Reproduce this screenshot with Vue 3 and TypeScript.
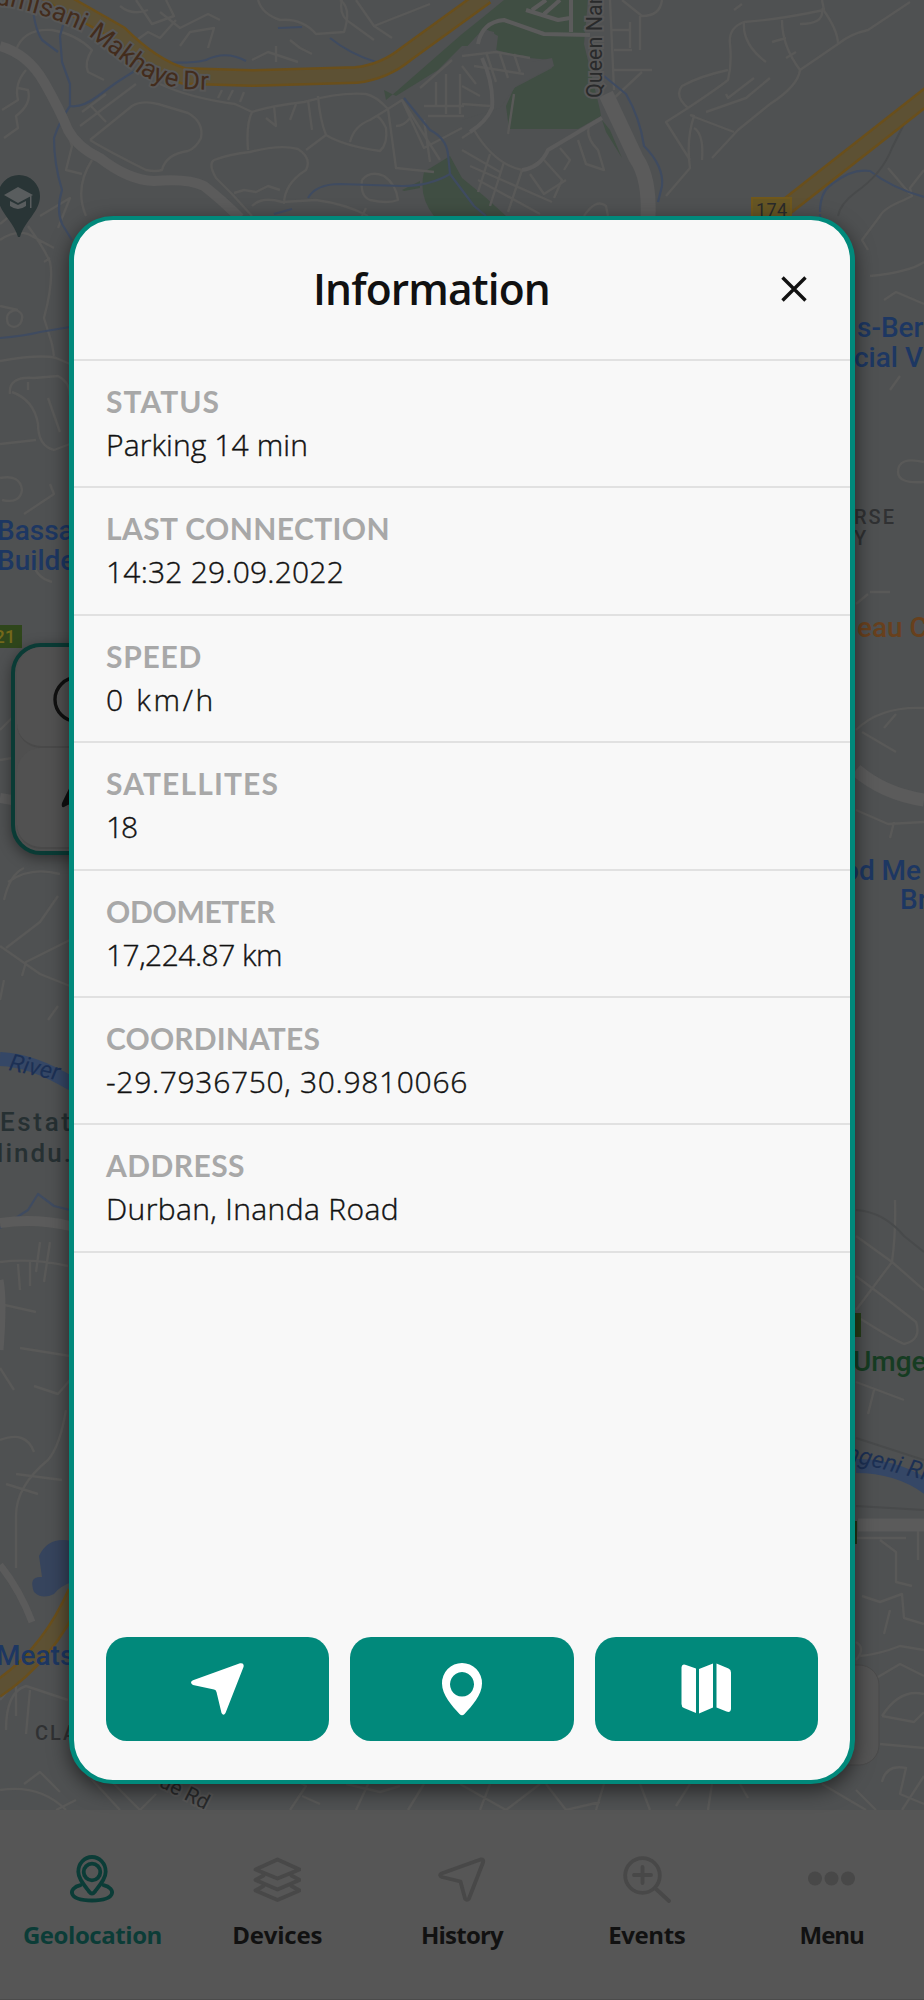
<script setup lang="ts">
import type { Directive } from "vue";

interface InfoRow {
	label: string;
	value: string;
	labelWidth: number;
	valueWidth: number;
}

interface Tab {
	name: string;
	icon: string;
	width: number;
}

const rows: InfoRow[] = [
	{ label: "STATUS", value: "Parking 14 min", labelWidth: 114, valueWidth: 202 },
	{ label: "LAST CONNECTION", value: "14:32 29.09.2022", labelWidth: 284, valueWidth: 238 },
	{ label: "SPEED", value: "0 km/h", labelWidth: 96, valueWidth: 110 },
	{ label: "SATELLITES", value: "18", labelWidth: 173, valueWidth: 30 },
	{ label: "ODOMETER", value: "17,224.87 km", labelWidth: 169, valueWidth: 176 },
	{ label: "COORDINATES", value: "-29.7936750, 30.9810066", labelWidth: 214, valueWidth: 362 },
	{ label: "ADDRESS", value: "Durban, Inanda Road", labelWidth: 139, valueWidth: 293 },
];

const tabs: Tab[] = [
	{ name: "Geolocation", icon: "geo", width: 139 },
	{ name: "Devices", icon: "layers", width: 90 },
	{ name: "History", icon: "arrow", width: 82 },
	{ name: "Events", icon: "zoom", width: 77 },
	{ name: "Menu", icon: "dots", width: 64 },
];

const activeTab = "Geolocation";

// Tracks a line of text so that it fills the given width.
const vFit: Directive<HTMLElement, number> = {
	mounted(el, { value }) {
		const count = (el.textContent ?? "").length;
		const natural = el.getBoundingClientRect().width;
		el.style.letterSpacing = `${(value - natural) / count}px`;
	},
};

const minorRoads: string[] = [
	// top left
	"M16 50 Q24 28 52 30 Q76 34 92 50 Q84 62 88 72 L104 80",
	"M26 70 Q14 84 18 100 L2 110 M18 88 l10 2 q4 14 -12 26 l2 12 l-14 10",
	"M90 140 L132 106 Q142 100 158 104 L188 113 Q204 122 201 138 Q196 148 188 151 Q166 154 162 170 Q156 172 146 170 Q106 150 90 140",
	"M80 126 L136 84 M90 105 L106 122 M82 112 l24 -18 M66 128 L72 146 L66 170 L82 174",
	"M160 84 Q190 98 235 104 L252 112 Q246 124 248 150 M252 112 Q270 106 304 102 Q340 92 366 94 Q376 96 388 109",
	"M218 98 l4 -8 M228 100 l5 -10 M240 102 l4 -10 M274 106 l2 20 l-10 -8 M296 104 l-6 16 M308 100 l4 30",
	"M318 96 Q320 120 326 135 Q344 146 380 151 Q388 144 386 128 Q380 116 376 116 M326 135 L306 150",
	"M214 160 Q208 164 216 178 L232 194 L252 216 M214 160 Q230 154 250 152 Q280 144 298 149 Q312 158 306 170 Q284 184 284 204",
	"M252 206 Q262 196 282 202 L316 200 Q346 204 368 216 M234 193 l10 -3 l12 2 l12 -6 l12 4",
	"M120 6 Q132 16 148 10 M124 30 l10 12 l14 -10 l12 6 l16 -18 M136 0 l16 24 l22 -8 l-8 -16 M180 46 l10 -14 l24 -4 l-6 20 M160 12 l20 16 l28 -14 l12 6",
	"M258 0 Q262 14 280 20 Q302 18 316 34 L344 32 Q352 8 340 0 M290 40 l10 8 l12 6 M252 60 l16 -8 l30 10 M276 46 v16",
	"M342 0 Q338 16 352 24 L374 40 M356 0 L374 26 L430 4 M374 26 l18 12",
	"M92 160 Q74 188 86 216 M40 216 l30 -18 l-12 30 M0 224 l12 -10",
	"M350 142 Q354 126 370 120 L388 109 L402 100 L440 160 M388 109 L396 168 L434 172 M402 100 L424 148 L462 128 M410 118 q-6 8 -14 8 M424 120 L430 162",
	"M362 180 Q360 196 370 200 Q388 204 398 200 Q396 184 384 176 Q370 170 362 180 M366 208 l-6 12",
	// top centre, round the park
	"M420 88 L452 60 M424 106 h40 M428 116 h36 M436 82 v24 M446 74 v40 M460 74 v40",
	"M462 56 L496 52 L530 58 M474 66 L524 74 M486 52 l10 30 M500 54 l8 24 M514 54 l6 18 M462 66 l14 18 M462 86 l18 10 M462 104 l28 2",
	"M474 130 Q494 164 522 170 Q542 164 548 150 L602 118 M474 130 L462 138 M508 134 Q512 108 514 94",
	"M462 150 L500 172 M470 166 L552 202 M478 180 L540 214 M490 154 L478 192 M504 162 L490 206 M522 170 L508 212 M544 160 l18 20 l-8 18 M560 148 l10 12 l-6 10 M590 124 q-6 12 8 26 l6 20 l-18 -6 l-8 -24",
	"M584 216 Q596 198 606 206 L608 216 M530 174 l14 20 l22 -14",
	"M610 0 L614 90 M611 30 h18 M614 50 h18 M612 70 h40 M622 0 L642 16 Q660 16 662 0 M640 16 V50 M630 22 V48 M642 72 L612 100",
	// top right
	"M822 0 L824 10 Q776 20 744 22 Q728 28 730 44 Q732 64 728 80 Q718 88 688 108 Q674 96 682 86 Q700 76 728 70",
	"M744 22 Q742 44 766 62 M782 20 Q782 46 800 70 Q798 86 770 104 L738 130 L712 158 M822 8 Q838 30 838 44 L800 70",
	"M838 44 Q850 34 868 30 L910 2 M800 24 q24 0 22 -14 M772 42 l14 -4 M742 4 l-8 6 M786 58 l10 -6",
	"M688 108 L666 122 L690 160 M690 115 L694 116 Q686 140 690 168 L666 196 M692 116 L734 132 M706 112 L746 98 L770 78 M694 128 Q704 134 702 160 M754 78 L728 98 l-2 -4",
	"M880 216 Q884 208 904 200 L912 196 L910 188 L924 170 M888 168 L910 194 M880 216 L862 240 L868 250",
	// left strip
	"M0 240 q14 -10 28 -6 l26 14 M28 226 Q44 248 50 262 Q54 280 44 318 L52 344 L54 356 M44 262 l6 -4 M0 306 l18 4 M8 324 q-4 -12 8 -14 q10 4 4 14 q-6 6 -12 0",
	"M0 361 Q40 354 56 358 L70 364 M10 394 Q8 376 34 378 L58 376 Q70 382 70 396 M12 392 Q34 400 38 424 Q38 446 54 450 L70 444 M48 398 L60 432 M0 444 l36 -4 M28 382 v8",
	"M0 478 Q20 474 22 490 Q20 504 2 500 M24 514 L54 494 L50 484 M34 552 Q30 576 52 582 M0 730 L24 706 M0 760 l12 -2 M8 882 Q30 866 60 874 M4 900 Q10 874 24 868 M58 896 L40 922 L6 948",
	"M0 946 L40 974 L70 986 M22 976 L26 962 L70 940 M0 1000 L4 980 M48 1020 l10 -14",
	"M0 1262 Q32 1258 68 1266 M18 1264 l2 26 M30 1262 v24 M40 1242 l-4 30 M50 1242 l-6 40 M0 1304 L36 1312 M20 1348 L70 1356 M0 1368 L14 1390 M34 1386 L58 1394 L70 1380 M0 1440 Q26 1430 34 1452 M16 1474 l46 6 M6 1484 l32 10 M66 1410 Q60 1446 48 1460 Q16 1486 16 1516 L16 1568",
	"M6 1730 Q6 1692 26 1686 L68 1700 M16 1686 V1716 M30 1690 l-4 44 M0 1700 l10 -12 M24 1784 l16 -12 l20 20",
	"M0 1790 Q40 1784 66 1810 M74 1760 L120 1810 M108 1778 L140 1810 L156 1794 M76 1800 l-20 10",
	// strip under the sheet
	"M290 1810 L306 1786 L296 1780 M302 1796 L320 1804 M356 1810 L370 1780 M346 1784 L380 1792 L400 1786 M424 1784 L408 1810 M460 1784 L506 1810 L540 1784 M490 1784 L480 1810 M546 1784 L566 1810 L600 1802 M604 1784 L596 1810 M640 1784 L650 1810 M690 1784 L676 1806 M712 1784 L708 1810 M740 1784 l8 14 M822 1784 L866 1810 M902 1810 L924 1776",
	// right strip
	"M870 276 Q910 272 924 262 M884 300 L896 292 L924 304 M900 376 l-10 14 M924 462 Q898 456 898 472 Q898 484 924 482 M856 730 Q880 706 924 708 M884 728 l12 -14 M862 732 l34 20 M856 810 L888 824 L924 822 M890 838 L894 822 M870 592 l20 0 M856 604 l12 -10",
	"M895 1200 Q896 1232 892 1262 L856 1310 M856 1236 L892 1262 L924 1290 M856 1276 L888 1300 L916 1322 Q922 1340 904 1344 Q894 1340 856 1316 M856 1382 L904 1400 M874 1390 L868 1414",
	"M856 1538 h50 M880 1540 l16 12 v30 l16 4 M918 1530 v30 M862 1596 L880 1602 L902 1594 L904 1618 L924 1624 M890 1610 l-6 24 M856 1642 q10 6 0 18 M860 1656 Q880 1654 900 1646 L924 1650",
	"M856 1690 L900 1664 L924 1676 M882 1716 Q900 1688 924 1694 M882 1716 L914 1722 L924 1712 M880 1744 L924 1748 M882 1782 Q886 1764 906 1768 L900 1794 L924 1804 M856 1790 l20 20",
];

const streams: string[] = [
	"M32 0 Q34 28 42 40 L58 52 M70 0 L60 36 L62 62 L70 84 L70 106 Q60 120 54 138 Q54 164 62 190 Q56 210 62 224 L72 240",
	"M70 106 Q82 108 98 96 Q116 82 136 70",
	"M162 62 Q190 64 206 60 Q226 50 246 61",
	"M330 38 Q350 54 376 62 M278 28 L302 27",
	"M404 98 L430 130 Q446 138 448 154 L450 174 L474 206 L486 216",
	"M308 198 Q316 184 340 184 L402 186 Q430 186 450 174 M274 214 l18 -5",
	"M604 76 L626 94 Q640 118 644 146 Q664 166 662 186 L658 202",
	"M820 212 Q820 192 832 184 Q852 168 870 171 Q892 188 924 197",
	"M0 338 Q24 336 40 332 L70 327 M820 214 Q820 224 824 228",
	"M0 1228 L28 1210 L38 1194 L54 1206 L70 1210",
];
</script>

<template>
	<div class="screen">
		<svg class="map" viewBox="0 0 924 1810" aria-hidden="true">
			<rect width="924" height="1810" fill="#4f5152" />
			<g class="park">
				<path d="M384 90 L386 100 L398 90 L462 34 L482 18 L504 0 H588 L584 44 L600 110 L601 116 L578 129 H509 L506 106 L514 88 L552 68 L550 60 L530 58 L520 56 L496 50 L494 32 L486 30 L480 46 L462 46 L438 70 L396 96 Z" />
				<path d="M424 172 L450 156 L462 178 L484 196 L506 216 H434 Q418 196 424 172 Z M402 190 L420 181 V188 L404 191 Z M602 120 L610 130 L622 158 L606 132 Z" />
			</g>
			<g class="built">
				<path d="M462 52 L484 28 L498 36 L496 52 L526 56 L532 62 L552 58 L554 66 L516 86 L500 108 L462 120 Z" />
			</g>
			<g class="minor">
				<path v-for="(d, i) in minorRoads" :key="i" :d="d" />
			</g>
			<g class="stream">
				<path v-for="(d, i) in streams" :key="i" :d="d" />
			</g>
			<path class="rail" d="M838 216 Q840 204 856 192 Q882 174 892 148 L910 112 M856 1210 Q884 1212 904 1236 L924 1252 M856 1438 L924 1460 M856 1506 L924 1510" />

			<g class="major">
				<path d="M0 46 Q28 54 44 82 Q60 110 68 130 Q78 148 100 158 Q128 180 154 181 Q188 178 204 186 Q222 200 240 218" />
				<path d="M606 94 L636 158 Q650 178 648 218" stroke-width="15" />
				<path d="M478 44 Q482 22 504 20 L544 34 L590 35 M482 58 Q494 84 492 108 Q486 122 470 132 M571 32 V0 M526 10 l32 10 l12 -2 M532 10 l14 -10 M544 14 l16 -14" stroke-width="4" />
				<path d="M602 118 L548 150 Q540 168 522 170" stroke-width="4" />
				<path d="M856 770 Q884 794 924 800 M858 1525 H924" stroke-width="13" />
				<path d="M0 798 L12 800 M0 1223 Q36 1218 70 1226" stroke-width="10" />
				<path d="M0 1280 Q4 1300 0 1350 M0 1565 Q20 1590 32 1622" stroke-width="7" />
			</g>

			<path class="highway-edge" d="M46 -8 L120 34 Q152 66 184 76 L252 78 L356 75 Q384 72 406 54 L486 -4" />
			<path class="highway" d="M46 -8 L120 34 Q152 66 184 76 L252 78 L356 75 Q384 72 406 54 L486 -4" />
			<path class="highway-edge" d="M772 218 L930 94" />
			<path class="highway" d="M772 218 L930 94" />
			<path class="highway-edge" d="M-4 1690 Q48 1656 76 1592" />
			<path class="highway" d="M-4 1690 Q48 1656 76 1592" />

			<path class="water" d="M39 1556 Q48 1536 72 1541 V1582 Q60 1586 54 1594 Q42 1600 34 1592 Q28 1576 42 1577 Z" />
			<path class="river" d="M0 1059 Q32 1060 72 1084 M856 1466 Q898 1466 928 1488" />

			<path id="makhaye" class="guide" d="M-12 4 Q14 6 30 12 Q60 20 84 32 Q112 54 134 70 Q156 85 184 89 L240 91" />
			<text class="street brown" font-size="26"><textPath href="#makhaye" startOffset="7">umisani Makhaye Dr</textPath></text>
			<text class="street" font-size="21.5" transform="translate(602 98) rotate(-90)">Queen Nandi</text>
			<text class="street" font-size="21" transform="translate(158 1786) rotate(27)">ue Rd</text>

			<g>
				<path fill="#293536" d="M19 175 a21 21 0 0 1 21 21 C40 212 25 220 20 237 h-2 C13 220 -2 212 -2 196 a21 21 0 0 1 21 -21 Z" />
				<path fill="#595d5e" d="M4 195 L18 187 L33 195 L18 203 Z M10 201 L18 205 L26 201 V206 Q18 212 10 206 Z M30 196 h1.5 v12 h-1.5 Z" />
			</g>

			<rect x="752" y="198" width="39" height="28" fill="#665624" stroke="#70581c" stroke-width="2" />
			<text x="756" y="216" class="shield" font-size="18" textLength="31">174</text>
			<rect x="-20" y="625" width="42" height="23" fill="#2f461b" />
			<text x="-6" y="643" font-size="19" fill="#74681a" font-weight="500">21</text>

			<g class="place blue">
				<text x="-3" y="540">Bassa</text>
				<text x="-3" y="570">Builde</text>
				<text x="857" y="337">s-Ber</text>
				<text x="854" y="367">cial V</text>
				<text x="843" y="880">od Me</text>
				<text x="900" y="909">Br</text>
				<text x="-4" y="1665">Meats</text>
			</g>
			<text class="place orange" x="857" y="637">eau C</text>
			<text class="place slate" x="0" y="1131" textLength="70">Estat</text>
			<text class="place slate" x="-15" y="1162" textLength="86">Hindu.</text>
			<text class="area" x="854" y="524">RSE</text>
			<text class="area" x="854" y="545">Y</text>
			<text class="area" x="35" y="1740">CLA</text>
			<text class="river-name" transform="translate(8 1070) rotate(12)">River</text>
			<text class="river-name" transform="translate(845 1460) rotate(14)">ngeni Ri</text>
			<rect x="840" y="1313" width="21" height="24" fill="#273d18" />
			<rect x="840" y="1521" width="17" height="23" fill="#203616" />
			<text class="place green" x="853" y="1371">Umge</text>

			<rect x="780" y="1665" width="99" height="100" rx="20" fill="#555555" stroke="#4b4b4b" stroke-width="1" />
		</svg>

		<aside class="map-tools">
			<div class="tool">
				<svg viewBox="0 0 48 48">
					<circle cx="25" cy="26.500" r="22" fill="none" stroke="#101010" stroke-width="3.4" />
				</svg>
			</div>
			<div class="tool">
				<svg viewBox="0 0 48 48"><path d="M26 -4 L44 32 Q26 24 12 33 Q9 34 10 29 Z" fill="#101010" /></svg>
			</div>
		</aside>

		<nav class="tabbar">
			<button
				v-for="tab in tabs"
				:key="tab.name"
				type="button"
				class="tab"
				:class="{ active: tab.name === activeTab }"
			>
				<svg class="tab-icon" viewBox="0 0 48 48" aria-hidden="true">
					<g v-if="tab.icon === 'geo'">
						<path d="M24 38.5 Q22.500 38.500 21 36.500 C15 28.500 10.300 23 10.300 16.700 a13.700 14.700 0 0 1 27.400 0 C37.700 23 33 28.500 27 36.500 Q25.500 38.500 24 38.500 Z" />
						<circle cx="24" cy="17" r="8.300" />
						<path d="M12.500 30.200 C0 33 -1 45.500 24 45.500 S48 33 35.500 30.200" />
					</g>
					<g v-else-if="tab.icon === 'layers'">
						<path d="M24.500 4.500 L46.500 14.500 L24.500 23.500 L2.500 14.500 Z" />
						<path d="M10.500 20.500 L2.500 25 L24.500 34.500 L46.500 25 L38.500 20.500" />
						<path d="M10.500 31 L2.500 35.500 L24.500 45 L46.500 35.500 L38.500 31" />
					</g>
					<path v-else-if="tab.icon === 'arrow'" d="M3.500 18.500 L42.500 4.500 Q46 4 45 7.500 L31 43.500 Q29 46 27 43.500 L22.500 26.500 L4 22 Q0.500 20 3.500 18.500 Z" />
					<g v-else-if="tab.icon === 'zoom'">
						<circle cx="19.500" cy="20.500" r="17.300" />
						<path d="M19.500 12 V28 M11 20 H28 M32.500 33.500 L46 46" />
					</g>
					<g v-else class="dots">
						<circle cx="7" cy="23.500" r="7" />
						<circle cx="23.500" cy="23.500" r="7" />
						<circle cx="40" cy="23.500" r="7" />
					</g>
				</svg>
				<span v-fit="tab.width" class="tab-name">{{ tab.name }}</span>
			</button>
		</nav>

		<div class="overlay">
			<section class="sheet" role="dialog" aria-label="Information">
				<header class="sheet-head">
					<h1 class="sheet-title"><span v-fit="237">Information</span></h1>
					<button type="button" class="close" aria-label="Close">
						<svg viewBox="0 0 28 28"><path d="M2.500 2.500 L25.500 25.500 M25.500 2.500 L2.500 25.500" /></svg>
					</button>
				</header>
				<dl class="rows">
					<div v-for="row in rows" :key="row.label" class="row">
						<dt><span v-fit="row.labelWidth">{{ row.label }}</span></dt>
						<dd><span v-fit="row.valueWidth">{{ row.value }}</span></dd>
					</div>
				</dl>
				<footer class="actions">
					<button type="button" class="action" aria-label="Navigate">
						<svg viewBox="0 0 56 56">
							<path d="M50 2.300 Q54.500 1.500 53.500 6 L35.500 52 Q33.500 55.500 31.500 52 L26.500 31 Q26 29 24 28.600 L3 24 Q-1 21.500 3 19.300 Z" />
						</svg>
					</button>
					<button type="button" class="action" aria-label="Street view">
						<svg viewBox="0 0 56 56">
							<path fill-rule="evenodd" d="M28 2 a20 20 0 0 1 20 20.500 C48 34 38 45 30.500 53 Q28 55.500 25.500 53 C18 45 8 34 8 22.500 A20 20 0 0 1 28 2 Z M28 11 a12 12.300 0 1 0 0.010 0 Z" />
						</svg>
					</button>
					<button type="button" class="action" aria-label="Open map">
						<svg viewBox="0 0 56 56">
							<path d="M18 7.500 V52 L6 47 Q3.500 46 3.500 43 V6.500 Q4 2.500 8 4 Z M21 8 L35 2.500 V46.500 L21 52.500 Z M38.500 2.500 L50.500 7.500 Q53 8.500 53 11.500 V48 Q52.500 52 48.500 50.500 L38.500 46.500 Z" />
						</svg>
					</button>
				</footer>
			</section>
		</div>
	</div>
</template>

<style>
body {
	margin: 0;
	background: #565656;
}
</style>

<style scoped>
.screen {
	position: relative;
	display: flex;
	flex-direction: column;
	justify-content: flex-end;
	width: 924px;
	height: 2000px;
	overflow: hidden;
	background: #565656;
	font-family: "Open Sans", Lato, sans-serif;
}
button {
	padding: 0;
	border: none;
	background: none;
	font: inherit;
	color: inherit;
}

/* The map is the backdrop of the whole screen above the tab bar. */
.map {
	position: absolute;
	top: 0;
	left: 0;
	width: 924px;
	height: 1810px;
	font-family: Roboto, sans-serif;
}
.map path {
	stroke-linejoin: round;
}
.park {
	fill: #404e43;
}
.built {
	fill: #4f5152;
}
.minor {
	fill: none;
	stroke: #595958;
	stroke-width: 2.4;
}
.major {
	fill: none;
	stroke: #5b5b5b;
	stroke-width: 10;
}
.stream {
	fill: none;
	stroke: #3f4b60;
	stroke-width: 2.2;
}
.rail {
	fill: none;
	stroke: #484a4b;
	stroke-width: 2;
}
.highway-edge {
	fill: none;
	stroke: #6a4f1b;
	stroke-width: 18;
}
.highway {
	fill: none;
	stroke: #5d5134;
	stroke-width: 13;
}
.water {
	fill: #36445d;
}
.river {
	fill: none;
	stroke: #354766;
	stroke-width: 14;
}
.guide {
	fill: none;
}
.street {
	fill: #292a2b;
	stroke: #575757;
	stroke-width: 4;
	paint-order: stroke;
}
.street.brown {
	fill: #432c1c;
}
.shield {
	fill: #292a2b;
}
.place {
	font-size: 28px;
	font-weight: 500;
}
.blue {
	fill: #1d3762;
}
.orange {
	fill: #68401d;
}
.slate {
	fill: #263032;
	font-size: 26px;
}
.green {
	fill: #163c22;
}
.area {
	fill: #303133;
	font-size: 20px;
	font-weight: 500;
	letter-spacing: 2px;
}
.river-name {
	fill: #1c3054;
	font-size: 24px;
	font-style: italic;
}

.map-tools {
	position: absolute;
	top: 643px;
	left: 11px;
	box-sizing: border-box;
	width: 130px;
	height: 212px;
	border: 4px solid #0a3b35;
	border-radius: 30px;
	background: #4f4f4f;
	box-shadow: 0 4px 14px rgba(0, 0, 0, 0.4);
	overflow: hidden;
}
.tool {
	display: flex;
	align-items: center;
	justify-content: center;
	box-sizing: border-box;
	height: 101px;
	margin: 0 2px;
	border-bottom: 2px solid #494949;
	border-radius: 24px;
	background: #515151;
}
.tool svg {
	width: 48px;
	height: 48px;
	overflow: visible;
}

.tabbar {
	position: relative;
	display: grid;
	grid-template-columns: repeat(5, 1fr);
	box-sizing: border-box;
	height: 190px;
	padding-top: 45px;
	border-bottom: 1px solid #4b4b4b;
	background: #565656;
}
.tab {
	display: flex;
	flex-direction: column;
	align-items: center;
	gap: 15px;
	color: #111;
}
.tab-icon {
	width: 48px;
	height: 48px;
	fill: none;
	stroke: #484848;
	stroke-width: 3.8;
	stroke-linecap: round;
	stroke-linejoin: round;
}
.tab-icon .dots {
	fill: #484848;
	stroke: none;
}
.tab-name {
	font-size: 24px;
	line-height: 34px;
	font-weight: 700;
	white-space: nowrap;
}
.tab.active {
	color: #0b3c37;
}
.tab.active .tab-icon {
	stroke: #0b3c37;
}

.overlay {
	position: absolute;
	inset: 0;
	box-sizing: border-box;
	padding: 216px 69px;
}
.sheet {
	display: flex;
	flex-direction: column;
	box-sizing: border-box;
	height: 100%;
	border: solid #01897b;
	border-width: 4px 5px;
	border-radius: 44px;
	background: #f8f8f8;
	box-shadow: 0 6px 20px rgba(0, 0, 0, 0.55);
	color: #111;
}
.sheet-head {
	display: flex;
	align-items: center;
	box-sizing: border-box;
	height: 141px;
	padding: 0 26px 1px 25px;
	border-bottom: 2px solid #e1e1e1;
}
.sheet-title {
	flex: 1;
	margin: 0;
	font-size: 42.500px;
	line-height: 60px;
	font-weight: 600;
	text-align: center;
	white-space: nowrap;
}
.close {
	display: flex;
	align-items: center;
	justify-content: center;
	width: 60px;
	height: 60px;
}
.close svg {
	width: 28px;
	height: 28px;
	fill: none;
	stroke: #111;
	stroke-width: 3.4;
}
.rows {
	margin: 0;
}
.row {
	box-sizing: border-box;
	height: 127.420px;
	padding: 19px 32px 0;
	border-bottom: 2px solid #e1e1e1;
	font-size: 30px;
	line-height: 43px;
	white-space: nowrap;
}
.row dt {
	color: #a8a8a8;
	font-family: Lato, "Open Sans", sans-serif;
	font-weight: 700;
}
.row dd {
	margin: 0;
	font-weight: 300;
	-webkit-text-stroke: 0.4px #111;
}
.actions {
	display: grid;
	grid-template-columns: repeat(3, 1fr);
	gap: 21px;
	margin-top: auto;
	padding: 0 32px 39px;
}
.action {
	display: flex;
	align-items: center;
	justify-content: center;
	height: 104px;
	border-radius: 21px;
	background: #01897b;
}
.action svg {
	width: 56px;
	height: 56px;
	fill: #fff;
}
</style>
